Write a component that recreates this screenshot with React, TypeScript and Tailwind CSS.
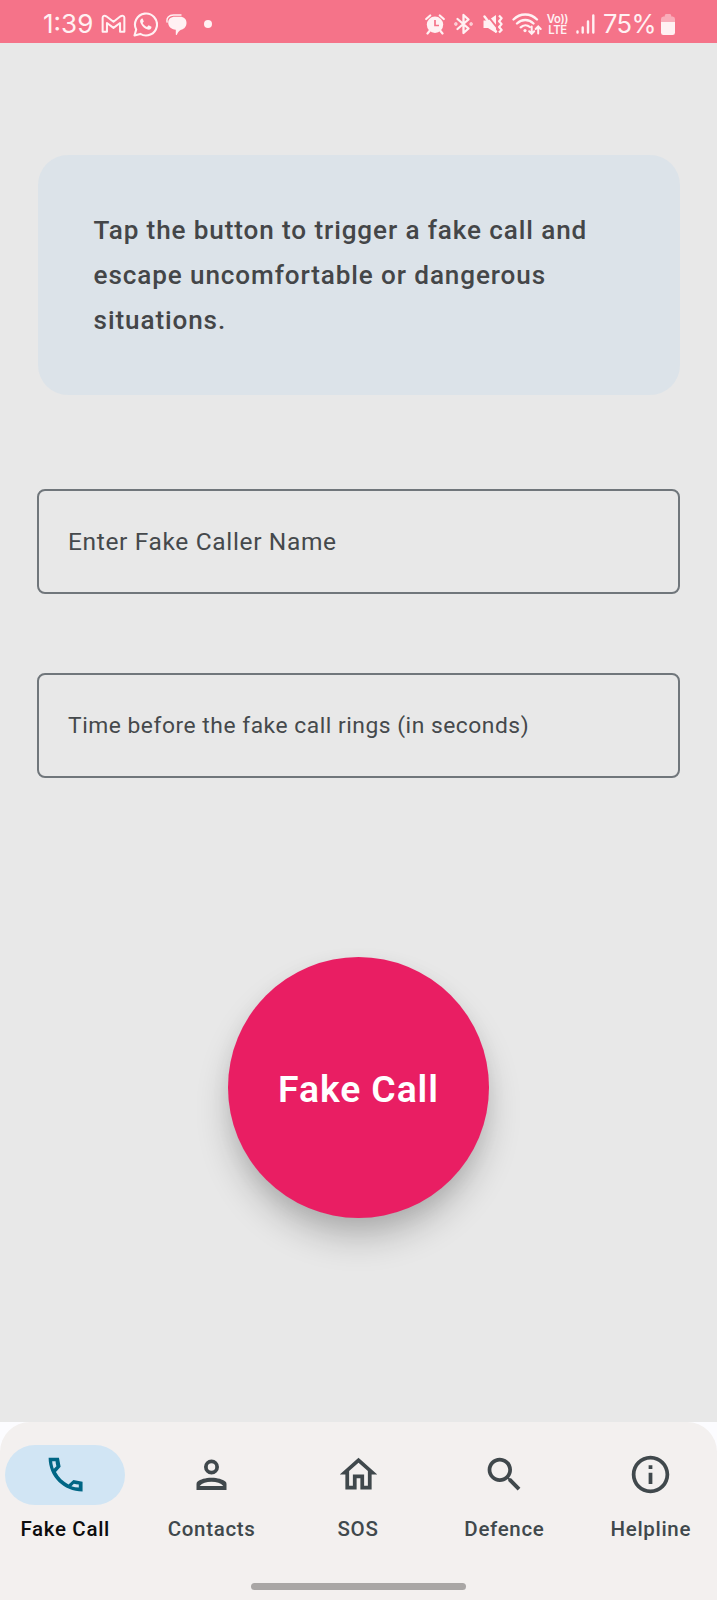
import React from "react";

const navItems = [
  {
    label: "Fake Call",
    active: true,
    d: "M6.7 4.900c.06.89.21 1.86.45 2.690l-1.400 1.300c-.41-1.200-.77-2.670-.86-3.990h1.810m9.760 12.020c.85.24 1.720.39 2.640.45v1.590c-1.320-.09-2.690-.35-3.940-.75l1.300-1.290M8.500 3H3c0 10 8 18 18.100 18v-5.200l-4.900-.9-2.600 2.370c-2.830-1.450-5.250-3.760-6.690-6.590L9.400 7.900z",
  },
  {
    label: "Contacts",
    active: false,
    d: "M12 4a4 4 0 1 0 0 8 4 4 0 0 0 0-8zm0 2a2 2 0 1 1 0 4 2 2 0 0 1 0-4zM12 13.700c-3.300 0-6 .9-7.400 2-.4.3-.6.8-.6 1.300v3.200h16v-3.200c0-.5-.2-1-.6-1.300-1.400-1.100-4.100-2-7.400-2zm0 2.200c2.700 0 5 .8 6.300 2.200H5.700c1.300-1.400 3.600-2.200 6.300-2.200z",
  },
  {
    label: "SOS",
    active: false,
    d: "M12 5.690l5 4.500V18h-2v-6H9v6H7v-7.810l5-4.500M12 3L2 12h3v8h6v-6h2v6h6v-8h3L12 3z",
  },
  {
    label: "Defence",
    active: false,
    d: "M15.5 14h-.79l-.28-.27C15.41 12.59 16 11.11 16 9.5 16 5.91 13.09 3 9.5 3S3 5.91 3 9.5 5.91 16 9.5 16c1.61 0 3.09-.59 4.23-1.57l.27.28v.79l5 4.99L20.49 19l-4.99-5zm-6 0C7.01 14 5 11.99 5 9.5S7.01 5 9.5 5 14 7.01 14 9.5 11.99 14 9.5 14z",
  },
  {
    label: "Helpline",
    active: false,
    d: "M11 7h2v2h-2zm0 4h2v6h-2zm1-9C6.48 2 2 6.48 2 12s4.48 10 10 10 10-4.48 10-10S17.52 2 12 2zm0 18c-4.41 0-8-3.59-8-8s3.59-8 8-8 8 3.59 8 8-3.59 8-8 8z",
  },
];

function StatusBar() {
  return (
    <header className="flex h-[43px] shrink-0 items-center bg-[#f57389] pl-[42px] pr-[42px] pt-[5px] text-[#fff1f3]">
      <span className="w-[52px] whitespace-nowrap pl-px font-[Inter] text-[26px] leading-[38px]">1:39</span>
      <svg className="ml-[7px] h-[20px] w-[25px]" viewBox="0 0 26 20" fill="none" stroke="currentColor" strokeWidth="2.1" strokeLinejoin="round">
        <path d="M1.7 3.5v14.500h4.500V9l6.800 5 6.800-5v9h4.500V3.500c0-2-2.200-2.800-4-1.500L13 7.700 5.500 2C3.700.7 1.700 1.500 1.700 3.500z" />
      </svg>
      <svg className="ml-[7px] h-[25px] w-[25px]" viewBox="0 0 25 25" fill="none" stroke="currentColor" strokeWidth="2.1">
        <path d="M1.5 23.500l1.700-6A11 11 0 1 1 7.300 21.900z" strokeLinejoin="round" />
        <path d="M8.800 6.500c-1.800 1-2.200 2.700-1 5.100 1.600 3.200 4 5.300 7 6 2.300.3 3.800-.8 3.700-2.900l-2.900-1.500-1.600 1.700c-2-.8-3.600-2.300-4.400-4l1.200-1.500-1.200-2.900z" fill="currentColor" stroke="none" />
      </svg>
      <svg className="ml-[8px] h-[21px] w-[22px]" viewBox="0 0 22 21" fill="currentColor">
        <path d="M9 2.800h5c4 0 6.500 2.400 6.500 6s-2 6.300-5.500 7c-1.500.8-3 2-4 4.700-.3.700-1.200.7-1.200 0v-4.700C5 15.300 2.200 12.500 2.200 8.800s2.500-6 6.800-6z" />
        <path d="M1.100 8C.2 4 3 1 7.500 1H15" fill="none" stroke="currentColor" strokeWidth="1.400" strokeLinecap="round" />
      </svg>
      <span className="ml-[16px] size-[8px] rounded-full bg-current" />

      <div className="ml-auto flex items-center">
        <svg className="h-[21px] w-[20px]" viewBox="0 0 20 21">
          <path d="M1.200 5l4-3.500M18.800 5l-4-3.500M4.500 17l-2 2.500M15.500 17l2 2.500" stroke="currentColor" strokeWidth="2.200" strokeLinecap="round" />
          <circle cx="10" cy="10.800" r="8.200" fill="currentColor" />
          <path d="M10 6v5.500h4" fill="none" stroke="#f57389" strokeWidth="1.700" />
        </svg>
        <svg className="ml-[9px] h-[22px] w-[19px]" viewBox="0 0 19 22" fill="none" stroke="currentColor" strokeWidth="2.300" strokeLinejoin="round" strokeLinecap="round">
          <path d="M3.500 6l11 9.500-5 4.500V2l5 4.500L3.500 16" />
          <circle cx="1.900" cy="11" r=".5" fill="currentColor" />
          <circle cx="17.100" cy="11" r=".5" fill="currentColor" />
        </svg>
        <svg className="ml-[10px] h-[22px] w-[20px]" viewBox="0 0 20 22">
          <path d="M.5 7.500H5L13 2v18l-8-5H.5z" fill="currentColor" />
          <path d="M4 2l12 15" stroke="#f57389" strokeWidth="2" />
          <path d="M1.500 3.500L13 18.500" stroke="currentColor" strokeWidth="2.400" strokeLinecap="round" />
          <path d="M16 2.500l2.600 2.800-2.500 2.900 2.500 2.900-2.500 2.900 2.500 2.900-2.600 2.700" fill="none" stroke="currentColor" strokeWidth="2.200" strokeLinejoin="round" />
        </svg>
        <svg className="ml-[9px] h-[24px] w-[30px]" viewBox="0 0 30 24" fill="none" stroke="currentColor" strokeWidth="2.300" strokeLinecap="round">
          <path d="M1.500 7.500C8 .8 18.500.8 25 7.500M5 11.500c4.700-4.700 11.800-4.700 16.500 0M8.700 15.300c2.600-2.500 6.500-2.700 9.200-.3" />
          <circle cx="13" cy="18.600" r="1.600" fill="currentColor" stroke="none" />
          <path d="M19.700 14.500v7M17.200 19.300l2.500 2.500 2.500-2.500M26.200 21.500v-7M23.700 17l2.500-2.500 2.500 2.500" strokeWidth="2" />
        </svg>
        <div className="ml-[5px] flex w-[21px] flex-col items-center pt-px font-[Inter] text-[11.3px] font-semibold leading-[11px] tracking-[-0.3px]">
          <span>Vo))</span>
          <span>LTE</span>
        </div>
        <svg className="ml-[8px] h-[20px] w-[19px]" viewBox="0 0 19 20" stroke="currentColor" strokeWidth="2.400" strokeLinecap="round">
          <path d="M1.500 17.500v1M6.700 13.500v5M12 7.500v11M17.300 1.500v17" />
        </svg>
        <span className="ml-[8px] w-[53px] whitespace-nowrap font-[Inter] text-[25.5px] leading-[38px] tracking-[-0.6px]">75%</span>
        <svg className="ml-[5px] h-[21px] w-[14px]" viewBox="0 0 15 21" preserveAspectRatio="none" fill="currentColor">
          <path d="M4 2.500V1.500Q4 0 5.500 0h4Q11 0 11 1.500v1h1.500Q15 2.500 15 5v3H0V5q0-2.500 2.500-2.500z" opacity=".45" />
          <path d="M0 8h15v10.500q0 2.500-2.500 2.500h-10Q0 21 0 18.500z" />
        </svg>
      </div>
    </header>
  );
}

function Field({ label, className }: { label: string; className: string }) {
  return (
    <label className="flex h-[105px] items-center rounded-[8px] border-2 border-[#70767b] px-[29px] pt-px">
      <span className={"whitespace-nowrap text-[#45494c] " + className}>{label}</span>
    </label>
  );
}

export default function App() {
  return (
    <div className="flex h-[1600px] w-[717px] flex-col overflow-hidden bg-[#fcfcff] font-[Roboto,sans-serif]">
      <StatusBar />
      <main className="flex flex-1 flex-col bg-[#e8e8e8] px-[37px] pt-[112px]">
        <section className="ml-[0.6px] mr-[0.4px] h-[240px] rounded-[30px] bg-[#dce3e9] px-[56px] pt-[53px]">
          <p className="whitespace-nowrap text-[26.1px] font-medium leading-[45px] tracking-[0.89px] text-[#444648]">
            Tap the button to trigger a fake call and
            <br />
            escape uncomfortable or dangerous
            <br />
            situations.
          </p>
        </section>
        <div className="mt-[94px] flex flex-col gap-[79px]">
          <Field label="Enter Fake Caller Name" className="text-[24.5px] tracking-[0.65px]" />
          <Field label="Time before the fake call rings (in seconds)" className="text-[22.8px] tracking-[0.53px]" />
        </div>
        <button className="mt-[179px] flex size-[261.4px] shrink-0 items-center justify-center self-center rounded-full bg-[#e91e63] pt-[5px] text-[37.3px] font-semibold tracking-[0.93px] text-white shadow-[0_22px_36px_-4px_rgba(0,0,0,0.24),0_6px_20px_rgba(0,0,0,0.05)]">
          Fake Call
        </button>
      </main>
      <nav className="flex h-[178px] shrink-0 flex-col items-center rounded-t-[30px] bg-[#f3f0ef]">
        <ul className="-ml-[0.5px] flex w-[717px] gap-[15px] self-start pt-[23px]">
          {navItems.map((item) => (
            <li key={item.label} className="flex flex-1 basis-0 flex-col items-center">
              <span className={item.active ? "flex h-[60px] w-[120px] items-center justify-center rounded-full bg-[#d1e5f4] text-[#006685]" : "flex h-[60px] w-[120px] items-center justify-center text-[#40484c]"}>
                <svg className="mb-px size-[45px]" viewBox="0 0 24 24" fill="currentColor">
                  <path fillRule="evenodd" d={item.d} />
                </svg>
              </span>
              <span className={item.active ? "mt-[9px] whitespace-nowrap text-[20.5px] font-medium leading-[30px] tracking-[0.68px] text-[#0c0c0d]" : "mt-[9px] whitespace-nowrap text-[20.5px] font-medium leading-[30px] tracking-[0.68px] text-[#40484c]"}>
                {item.label}
              </span>
            </li>
          ))}
        </ul>
        <div className="mt-auto mb-[10px] h-[7px] w-[215px] rounded-full bg-[#a9a6a5]" />
      </nav>
    </div>
  );
}
